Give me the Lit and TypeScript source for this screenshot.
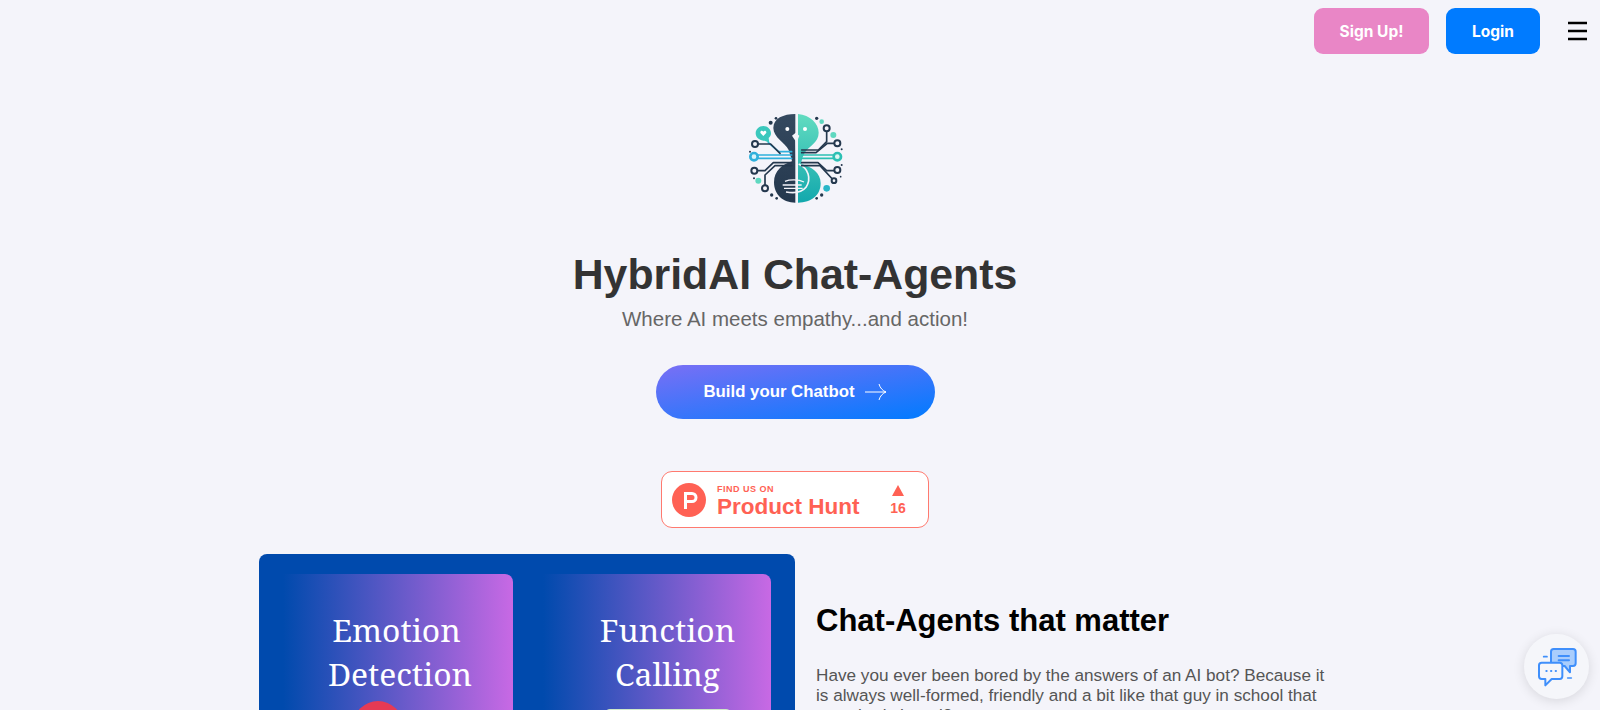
import { LitElement, html, css, svg } from "lit";
import { customElement } from "lit/decorators.js";

const logo = svg`<svg class="logo" viewBox="0 0 390 330" width="130" height="110" fill="none">
  <defs>
    <linearGradient id="tg" x1="0" y1="0" x2="0" y2="1"><stop offset="0" stop-color="#62dcc0"/><stop offset="1" stop-color="#12a8ad"/></linearGradient>
    <linearGradient id="dg" x1="0" y1="0" x2="0" y2="1"><stop offset="0" stop-color="#35495f"/><stop offset="1" stop-color="#24384e"/></linearGradient>
  </defs>
  <path d="M196 42 C160 42 130 55 130 84 C130 112 165 128 176 150 C180 164 184 172 186 184 C160 192 132 210 132 247 C132 285 160 308 196 308Z" fill="url(#dg)"/>
  <path d="M204 42 C240 45 266 70 266 98 C266 128 236 138 224 158 C218 170 214 180 214 192 C245 200 272 218 272 250 C272 285 245 308 204 308Z" fill="url(#tg)"/>
  <circle cx="172" cy="87" r="6" fill="#fff"/><circle cx="225" cy="87" r="6" fill="#fff"/>
  <path d="M186 107 L197 98 L208 107 L202 122 L201 190 L198 190 L196 122Z" fill="#f4f4fa"/>
  <path d="M206 192 C235 205 245 235 228 262 C215 278 190 280 168 276" stroke="#f4f4fa" stroke-width="5"/>
  <path d="M165 244 C180 238 205 238 222 246 M158 255 H215 M162 265 H218" stroke="#f4f4fa" stroke-width="4"/>
  <g stroke-width="5" stroke-linecap="round" stroke-linejoin="round">
    <g stroke="#2fb0dc">
      <path d="M85 165 H185 M85 175 H185"/>
      <path d="M115 128 L146 155 H185"/>
    </g>
    <g stroke="#24384e">
      <path d="M84 132 H122 L150 160"/>
      <path d="M82 212 H105 L130 188 H185"/>
      <path d="M105 257 V225 L135 197 H185"/>
    </g>
    <g stroke="#2cc0b4">
      <path d="M215 165 H310 M215 175 H310"/>
    </g>
    <g stroke="#24384e">
      <path d="M290 94 V125 L265 150 H215"/>
      <path d="M314 130 H292 L258 158 H215"/>
      <path d="M314 212 H290 L264 188 H215"/>
      <path d="M307 237 L270 197 H215"/>
    </g>
  </g>
  <path d="M100 78 C113 78 123 88 123 100 C123 106 120 111 116 114 L118 128 L104 122 C90 123 77 113 77 100 C77 88 87 78 100 78Z" fill="#3bc8bd"/>
  <path d="M100 95 C96 89 88 94 92 100 L100 108 L108 100 C112 94 104 89 100 95Z" fill="#fff"/>
  <g fill="#f4f4fa" stroke="#24384e" stroke-width="6">
    <circle cx="75" cy="132" r="9"/><circle cx="73" cy="212" r="9"/><circle cx="105" cy="265" r="9"/>
    <circle cx="290" cy="85" r="9"/><circle cx="322" cy="130" r="9"/><circle cx="322" cy="210" r="9"/><circle cx="312" cy="242" r="7"/>
  </g>
  <circle cx="72" cy="170" r="11" fill="#d8f2fa" stroke="#2fb0dc" stroke-width="8"/>
  <circle cx="322" cy="170" r="11" fill="#dff7f2" stroke="#2cc0b4" stroke-width="8"/>
  <g fill="#5fd8c0"><circle cx="85" cy="242" r="9"/><circle cx="310" cy="105" r="9"/><circle cx="275" cy="65" r="7"/></g>
  <circle cx="290" cy="265" r="10" fill="#2ab6c8"/>
  <g fill="#24384e">
    <circle cx="122" cy="68" r="6"/><circle cx="138" cy="55" r="4"/><circle cx="260" cy="55" r="5"/>
    <circle cx="125" cy="285" r="5"/><circle cx="140" cy="295" r="4"/><circle cx="260" cy="295" r="4"/><circle cx="275" cy="285" r="5"/>
    <circle cx="335" cy="148" r="3"/><circle cx="60" cy="155" r="3"/><circle cx="335" cy="195" r="3"/><circle cx="72" cy="235" r="3"/><circle cx="332" cy="230" r="2.500"/>
  </g>
</svg>`;

@customElement("app-root")
export class AppRoot extends LitElement {
  static styles = css`
    :host {
      display: block;
      height: 710px;
      overflow: hidden;
      background: #f4f4fa;
      font-family: "Liberation Sans", Arial, sans-serif;
    }
    .top {
      display: flex;
      justify-content: flex-end;
      align-items: center;
      padding: 8px 13px 0 0;
      height: 46px;
    }
    .btn {
      height: 46px;
      box-sizing: border-box;
      display: flex;
      align-items: center;
      justify-content: center;
      border-radius: 9px;
      color: #fff;
      font: 700 15.500px Inter, "Liberation Sans", sans-serif;
    }
    .signup { width: 115px; background: #e986c6; margin-right: 17px; }
    .login { width: 94px; background: #007bff; margin-right: 28px; }
    .burger { display: block; flex: none; }
    .hero {
      display: flex;
      flex-direction: column;
      align-items: center;
      padding: 46px 10px 0 0;
    }
    .logo { display: block; margin-bottom: 38px; }
    h1 {
      margin: 0;
      font-size: 42.800px;
      line-height: 52px;
      color: #333;
      font-weight: 700;
    }
    .sub {
      margin: 4px 0 0 0;
      font-size: 20.500px;
      line-height: 30px;
      color: #666;
    }
    .cta {
      width: 279px;
      height: 54px;
      margin-top: 31px;
      border-radius: 27px;
      background: linear-gradient(170deg, #7a6ff5 0%, #007bff 100%);
      color: #fff;
      font-weight: 700;
      font-size: 16.800px;
      display: flex;
      align-items: center;
      justify-content: center;
      gap: 10px;
    }
    .ph {
      width: 268px;
      height: 57px;
      box-sizing: border-box;
      margin-top: 52px;
      background: #fff;
      border: 1px solid #ff7a6f;
      border-radius: 11px;
      display: flex;
      align-items: center;
      padding-left: 10px;
      color: #ff6154;
    }
    .ph-p { display: block; flex: none; margin-right: 11px; }
    .ph-text { flex: 1; display: flex; flex-direction: column; padding-top: 4px; }
    .ph-find { font-size: 9px; font-weight: 700; line-height: 10px; letter-spacing: 0.500px; }
    .ph-name { font-size: 22.500px; font-weight: 700; line-height: 25px; }
    .ph-vote {
      width: 34px;
      margin: 2px 13px 0 0;
      display: flex;
      flex-direction: column;
      align-items: center;
      gap: 4px;
      font-size: 14px;
      font-weight: 700;
      line-height: 16px;
    }
    .tri { width: 0; height: 0; border: 6px solid transparent; border-top: 0; border-bottom: 11px solid #ff6154; }
    .feature {
      display: flex;
      margin: 26px 0 0 259px;
    }
    .panel {
      width: 536px;
      height: 300px;
      flex: none;
      box-sizing: border-box;
      padding: 20px 24px 0 24px;
      background: #004aad;
      border-radius: 8px 8px 0 0;
      display: flex;
      gap: 30px;
    }
    .card {
      border-radius: 0 8px 0 0;
      background: linear-gradient(90deg, #004aad 0%, #c869e4 100%);
      color: #fff;
      font-family: "Noto Serif", "DejaVu Serif", serif;
      font-size: 31.800px;
      line-height: 43.500px;
      text-align: center;
      padding-top: 34px;
      box-sizing: border-box;
      display: flex;
      flex-direction: column;
      align-items: center;
    }
    .card.one { flex: 0 0 230px; padding-left: 4px; }
    .card.two { flex: 1; padding-left: 21px; }
    .shift { margin-right: 7px; }
    .dot { flex: none; width: 50px; height: 50px; border-radius: 50%; background: #e63a54; margin: 6px 0 0 -44px; }
    .green { flex: none; width: 126px; height: 40px; border-radius: 6px; background: #8fc57f; border: 1px solid #cfe8c8; margin-top: 14px; }
    .copy { margin-left: 21px; width: 520px; padding-top: 47px; }
    h2 { margin: 0; font-size: 31px; line-height: 40px; color: #000; font-weight: 700; }
    .copy p { margin: 24px 0 0; font-size: 17.170px; line-height: 20px; color: #555; }
    .fab {
      position: fixed;
      right: 11px;
      bottom: 11px;
      width: 65px;
      height: 65px;
      border-radius: 50%;
      background: #f5f6fa;
      box-shadow: 0 2px 12px rgba(0,0,0,.12);
      display: flex;
      align-items: center;
      justify-content: center;
    }
  `;

  render() {
    return html`
      <div class="top">
        <div class="btn signup">Sign Up!</div>
        <div class="btn login">Login</div>
        <svg class="burger" width="19" height="20" viewBox="0 0 19 20" stroke="#000" stroke-width="2.600"><path d="M0 2 H19 M0 10 H19 M0 18 H19"/></svg>
      </div>
      <div class="hero">
        ${logo}
        <h1>HybridAI Chat-Agents</h1>
        <p class="sub">Where AI meets empathy...and action!</p>
        <div class="cta">Build your Chatbot
          <svg width="22" height="20" viewBox="0 0 22 20" fill="none" stroke="#fff" stroke-width="1"><path d="M0 10 H21 M14 2 C15 6 18 9 21 10 C18 11 15 14 14 18"/></svg>
        </div>
        <div class="ph">
          <svg class="ph-p" width="34" height="34" viewBox="0 0 34 34"><circle cx="17" cy="17" r="17" fill="#ff6154"/><path d="M12 9 h8 a5.500 5.500 0 0 1 0 11 h-5 v6 h-3Z M15 12 v5 h5 a2.500 2.500 0 0 0 0 -5Z" fill="#fff" fill-rule="evenodd"/></svg>
          <div class="ph-text"><span class="ph-find">FIND US ON</span><span class="ph-name">Product Hunt</span></div>
          <div class="ph-vote"><span class="tri"></span><span>16</span></div>
        </div>
      </div>
      <div class="feature">
        <div class="panel">
          <div class="card one"><span><span class="shift">Emotion</span><br />Detection</span><div class="dot"></div></div>
          <div class="card two">Function<br />Calling<div class="green"></div></div>
        </div>
        <div class="copy">
          <h2>Chat-Agents that matter</h2>
          <p>Have you ever been bored by the answers of an AI bot? Because it is always well-formed, friendly and a bit like that guy in school that everybody hated?</p>
        </div>
      </div>
      <div class="fab">
        <svg width="40" height="40" viewBox="80 65 120 120" fill="none" stroke="#3f8ffb" stroke-width="6" stroke-linejoin="round" stroke-linecap="round">
          <path d="M130 71 H188 a8 8 0 0 1 8 8 V114 a8 8 0 0 1 -8 8 H179 V141 L163 122 H130 a8 8 0 0 1 -8 -8 V79 a8 8 0 0 1 8 -8Z" fill="#a9cdfc"/>
          <path d="M94 112 H148 a8 8 0 0 1 8 8 V153 a8 8 0 0 1 -8 8 H124 L105 180 V161 H94 a8 8 0 0 1 -8 -8 V120 a8 8 0 0 1 8 -8Z" fill="#f5f6fa"/>
          <path d="M145 92 H176 M145 105 H176"/>
          <path d="M108 137 H109 M122 137 H123 M136 137 H137"/>
          <path d="M100 94 H110 M172 158 H183" stroke-width="5"/>
        </svg>
      </div>
    `;
  }
}
